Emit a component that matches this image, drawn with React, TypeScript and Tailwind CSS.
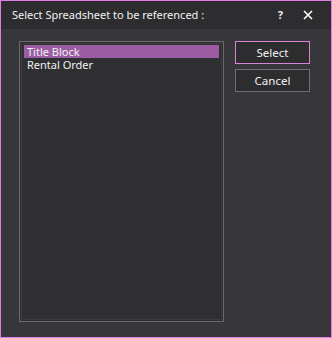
export default function App() {
  return (
    <div className="flex h-[338px] w-[332px] flex-col border border-[#e07ee6] bg-[#37363b] font-['Noto_Sans',sans-serif] text-[11px] text-[#f1f1f1]">
      <div className="flex h-[28px] items-center bg-[#2d2d30] pl-[11px] pr-[18px] text-[11px]">
        <span className="flex-1">Select Spreadsheet to be referenced :</span>
        <span className="mr-[20px] font-bold">?</span>
        <svg width="10" height="10" viewBox="0 0 10 10" className="mb-[1px]">
          <path d="M1 1L9 9M9 1L1 9" stroke="#ffffff" strokeWidth="1.6" />
        </svg>
      </div>
      <div className="flex gap-[11px] pl-[18px] pt-[12px]">
        <div className="h-[281px] w-[205px] border border-[#6a6a6a] bg-[#2f2f31] p-[1px]">
          <div className="h-full border border-[#3c3c3e] px-[2px] pt-[1px]">
            <div className="h-[13px] overflow-hidden bg-[#9b5ca4] pl-[3px] leading-[13px]">Title Block</div>
            <div className="h-[14px] overflow-hidden pl-[3px] leading-[14px]">Rental Order</div>
          </div>
        </div>
        <div className="flex flex-col gap-[5px] text-[11.5px]">
          <button className="h-[23px] w-[75px] border border-[#d784db] bg-[#2d2d30] text-[#f1f1f1]">
            Select
          </button>
          <button className="h-[23px] w-[75px] border border-[#6f6f6f] bg-[#2d2d30] text-[#f1f1f1]">
            Cancel
          </button>
        </div>
      </div>
    </div>
  );
}
